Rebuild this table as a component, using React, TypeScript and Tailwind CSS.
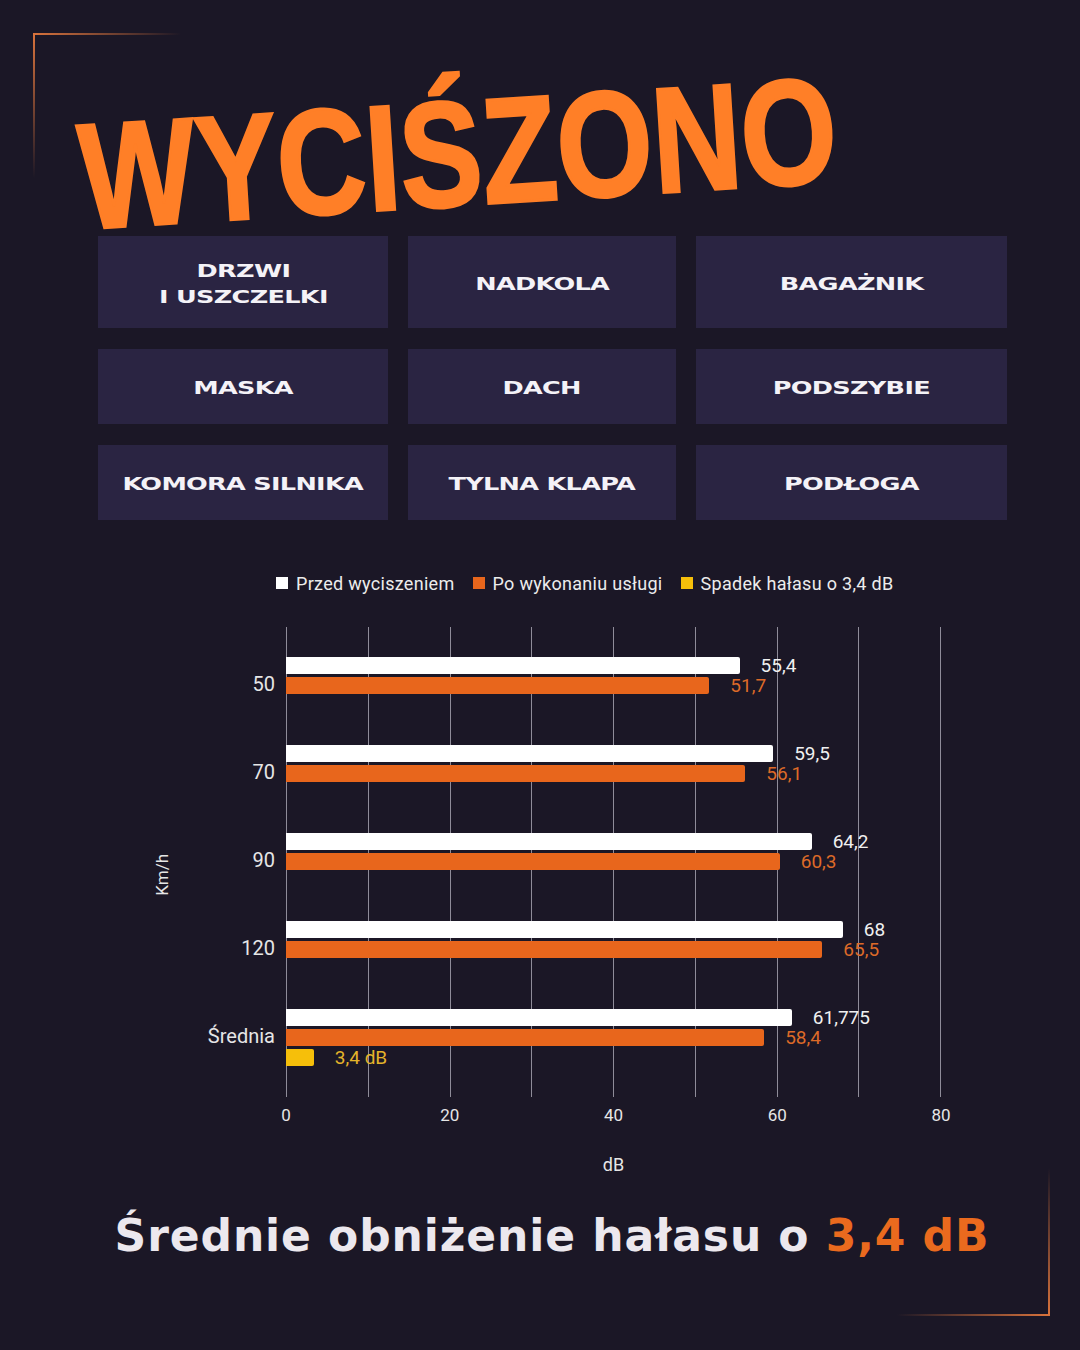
import React from "react";

const groups = [
    { label: "50", before: 55.4, beforeText: "55,4", after: 51.7, afterText: "51,7" },
    { label: "70", before: 59.5, beforeText: "59,5", after: 56.1, afterText: "56,1" },
    { label: "90", before: 64.2, beforeText: "64,2", after: 60.3, afterText: "60,3" },
    { label: "120", before: 68, beforeText: "68", after: 65.5, afterText: "65,5" },
    { label: "Średnia", before: 61.775, beforeText: "61,775", after: 58.4, afterText: "58,4", drop: 3.4 },
];

// 80 dB = 655px
const SCALE = 655 / 80;

const boxes = [
    ["DRZWI", "I USZCZELKI"],
    ["NADKOLA"],
    ["BAGAŻNIK"],
    ["MASKA"],
    ["DACH"],
    ["PODSZYBIE"],
    ["KOMORA SILNIKA"],
    ["TYLNA KLAPA"],
    ["PODŁOGA"],
];

function Bar({ value, text, color, textColor }: { value: number; text: string; color: string; textColor: string }) {
    return (
        <div className="flex items-center h-[17px]">
            <div className={`h-[17px] rounded-r-[2px] ${color}`} style={{ width: value * SCALE }} />
            <span className={`ml-[21px] text-[19px] leading-none whitespace-nowrap ${textColor}`}>{text}</span>
        </div>
    );
}

export default function App() {
    return (
        <div className="relative w-[1080px] h-[1350px] overflow-hidden bg-[#1b1726] flex flex-col font-['Roboto',sans-serif]">
            {/* ramki w rogach */}
            <div className="absolute left-[33px] top-[33px] w-[148px] h-[2px] bg-gradient-to-r from-[#d9733c] to-transparent" />
            <div className="absolute left-[33px] top-[33px] w-[2px] h-[145px] bg-gradient-to-b from-[#d9733c] to-transparent" />
            <div className="absolute left-[1048px] top-[1168px] w-[2px] h-[148px] bg-gradient-to-b from-transparent to-[#d9733c]" />
            <div className="absolute left-[897px] top-[1314px] w-[153px] h-[2px] bg-gradient-to-r from-transparent to-[#d9733c]" />

            {/* tytuł */}
            <div className="relative z-10 h-[236px]">
                <div className="pt-[102px] pl-[84px]">
                    <div className="inline-block origin-bottom-left -rotate-[3.6deg] scale-x-[0.82] text-[150px] leading-none font-bold text-[#ff7f27] font-['Liberation_Sans',sans-serif] [-webkit-text-stroke:3px_#ff7f27] whitespace-nowrap">
                        WYCIŚZONO
                    </div>
                </div>
            </div>

            {/* kafelki */}
            <div className="ml-[98px] grid grid-cols-[290px_268px_311px] grid-rows-[92px_75px_75px] gap-x-5 gap-y-[21px]">
                {boxes.map((lines) => (
                    <div key={lines.join(" ")} className="bg-[#2a2442] flex items-center justify-center pt-[3px]">
                        <span className="inline-block scale-x-[1.42] text-center text-[18px] leading-[26px] font-bold text-[#f4f2f7] font-['DejaVu_Sans',sans-serif] tracking-[-0.5px]">
                            {lines.map((l) => (
                                <span key={l} className="block">{l}</span>
                            ))}
                        </span>
                    </div>
                ))}
            </div>

            {/* legenda */}
            <div className="mt-[53px] h-[20px] pl-[276px] flex items-center gap-[18px] text-[18px] tracking-[0.3px] text-[#ececec]">
                <div className="flex items-center gap-[8px]">
                    <div className="w-[12px] h-[12px] bg-white" />
                    <span>Przed wyciszeniem</span>
                </div>
                <div className="flex items-center gap-[8px]">
                    <div className="w-[12px] h-[12px] bg-[#e8661c]" />
                    <span>Po wykonaniu usługi</span>
                </div>
                <div className="flex items-center gap-[8px]">
                    <div className="w-[12px] h-[12px] bg-[#f6bf0a]" />
                    <span>Spadek hałasu o 3,4 dB</span>
                </div>
            </div>

            {/* wykres */}
            <div className="mt-[34px] flex pl-[150px]">
                <div className="w-[26px] pt-[26px] flex items-center justify-center">
                    <span className="-rotate-90 whitespace-nowrap text-[17px] text-[#e6e6e6]">Km/h</span>
                </div>
                <div className="w-[99px] pt-[13px]">
                    {groups.map((g) => (
                        <div key={g.label} className="h-[88px] flex items-center justify-end text-[20px] text-[#e6e6e6]">
                            {g.label}
                        </div>
                    ))}
                </div>
                <div className="ml-[11px] relative w-[655px] h-[470px]">
                    <div className="absolute inset-0 flex">
                        {Array.from({ length: 8 }).map((_, i) => (
                            <div
                                key={i}
                                className={`flex-1 border-l-[1.5px] border-[#8f8c99] ${i === 7 ? "border-r-[1.5px]" : ""}`}
                            />
                        ))}
                    </div>
                    <div className="relative pt-[13px]">
                        {groups.map((g) => (
                            <div key={g.label} className="h-[88px] pt-[17px] flex flex-col gap-[3px]">
                                <Bar value={g.before} text={g.beforeText} color="bg-white" textColor="text-[#f0f0f0]" />
                                <Bar value={g.after} text={g.afterText} color="bg-[#e8661c]" textColor="text-[#dd6a28]" />
                                {g.drop && (
                                    <Bar value={g.drop} text="3,4 dB" color="bg-[#f6bf0a]" textColor="text-[#e4b42a]" />
                                )}
                            </div>
                        ))}
                    </div>
                </div>
            </div>

            {/* oś X */}
            <div className="mt-[8px] ml-[266px] w-[695px] h-[20px] flex justify-between text-[17px] text-[#e6e6e6]">
                {["0", "20", "40", "60", "80"].map((t) => (
                    <div key={t} className="w-[40px] text-center leading-[20px]">{t}</div>
                ))}
            </div>
            <div className="mt-[30px] ml-[286px] w-[655px] h-[20px] text-center text-[18px] leading-[20px] text-[#e6e6e6]">
                dB
            </div>

            {/* podsumowanie */}
            <div className="mt-[33px] h-[56px] pl-[24px] flex items-center justify-center font-['DejaVu_Sans',sans-serif] font-bold text-[44px] text-[#ece8ee] tracking-[0.9px]">
                <span>
                    Średnie obniżenie hałasu o <span className="text-[#ea6a1e]">3,4 dB</span>
                </span>
            </div>
        </div>
    );
}
